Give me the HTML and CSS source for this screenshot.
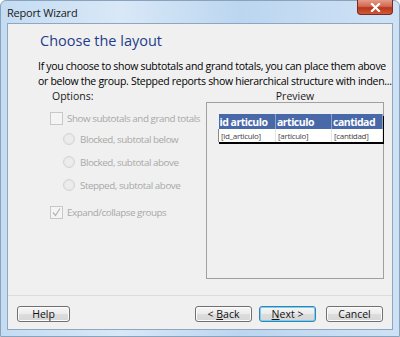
FILE: index.html
```html
<!DOCTYPE html>
<html lang="en">
  <head>
    <meta charset="UTF-8" />
    <title>Report Wizard</title>
    <link rel="stylesheet" href="styles.css">
  </head>
  <body>
    <div class="window">
      <div class="titlebar">
        <span class="title">Report Wizard</span>
        <button class="close" aria-label="Close">
          <svg width="11" height="9" viewBox="0 0 11 9">
            <path d="M2 1 L9 8 M9 1 L2 8" stroke="#fff" stroke-width="2.2" stroke-linecap="square" />
          </svg>
        </button>
      </div>
      <div class="client">
        <h1 class="heading">Choose the layout</h1>
        <p class="intro">
          If you choose to show subtotals and grand totals, you can place them above<br>
          or below the group. Stepped reports show hierarchical structure with inden...
        </p>
        <div class="columns">
          <div class="options">
            <div class="label">Options:</div>
            <label class="check disabled">
              <span class="box"></span>
              Show subtotals and grand totals
            </label>
            <div class="radios">
              <label class="radio disabled"><span class="dot"></span>Blocked, subtotal below</label>
              <label class="radio disabled"><span class="dot"></span>Blocked, subtotal above</label>
              <label class="radio disabled"><span class="dot"></span>Stepped, subtotal above</label>
            </div>
            <label class="check disabled expand">
              <span class="box checked">
                <svg width="9" height="9" viewBox="0 0 9 9">
                  <path d="M1 4.5 L3.5 7.5 L8 0.5" fill="none" stroke="#b4b4b4" stroke-width="1.2" />
                </svg>
              </span>
              Expand/collapse groups
            </label>
          </div>
          <div class="preview">
            <div class="label center">Preview</div>
            <div class="preview-box">
              <table class="report">
                <colgroup>
                  <col class="col-id">
                  <col class="col-name">
                  <col class="col-qty">
                </colgroup>
                <thead>
                  <tr>
                    <th>id articulo</th>
                    <th>articulo</th>
                    <th>cantidad</th>
                  </tr>
                </thead>
                <tbody>
                  <tr>
                    <td>[id_articulo]</td>
                    <td>[articulo]</td>
                    <td>[cantidad]</td>
                  </tr>
                </tbody>
              </table>
            </div>
          </div>
        </div>
        <div class="footer">
          <button class="btn">Help</button>
          <div class="spacer"></div>
          <button class="btn">&lt; <u>B</u>ack</button>
          <button class="btn default"><u>N</u>ext &gt;</button>
          <button class="btn cancel">Cancel</button>
        </div>
      </div>
    </div>
  </body>
</html>
```

FILE: styles.css
```css
html,
body {
  margin: 0;
  padding: 0;
  height: 100%;
}

body {
  font-family: "Open Sans", "Noto Sans", sans-serif;
  font-size: 10.5px;
  color: #000;
  background: #fff;
}

.window {
  width: 400px;
  height: 337px;
  box-sizing: border-box;
  display: flex;
  flex-direction: column;
  background: linear-gradient(90deg, #c4dcf2 0%, #d8e8f7 30%, #bcd6f0 60%, #cfe2f5 100%);
  border: 1px solid #8aa3bd;
  border-radius: 6px 6px 0 0;
}

/* title bar */
.titlebar {
  height: 22px;
  display: flex;
  align-items: flex-start;
  justify-content: space-between;
  padding: 0 6px 0 6px;
}

.title {
  margin-top: 4px;
  font-size: 11px;
  letter-spacing: -0.2px;
  color: #1a1a1a;
}

.close {
  width: 36px;
  height: 15px;
  margin-top: -1px;
  border: 1px solid #7a2a20;
  border-top: none;
  border-radius: 0 0 4px 4px;
  background: linear-gradient(#e49a88 0%, #d36a52 45%, #b8361c 55%, #cf5a3a 100%);
  display: flex;
  align-items: center;
  justify-content: center;
  padding: 0;
}

/* dialog body */
.client {
  flex: 1;
  margin: 0 6px 6px 6px;
  background: #f0f0f0;
  border: 1px solid #8fa6c0;
  display: flex;
  flex-direction: column;
}

.heading {
  margin: 7px 0 0 32px;
  font-size: 14.5px;
  font-weight: normal;
  color: #1f3d8a;
}

.intro {
  margin: 9px 0 0 30px;
  line-height: 15px;
  letter-spacing: -0.3px;
  white-space: nowrap;
}

.columns {
  display: flex;
  margin-top: 0;
}

.options {
  width: 198px;
  box-sizing: border-box;
  padding-left: 44px;
}

.label {
  color: #1a1a1a;
  height: 14px;
}

.label.center {
  text-align: center;
}

.check,
.radio {
  display: flex;
  align-items: center;
  gap: 4px;
  color: #a8a8a8;
  white-space: nowrap;
  font-size: 9.8px;
  letter-spacing: -0.45px;
  height: 14px;
}

.check {
  margin-top: 8px;
  margin-left: -2px;
}

.box {
  flex-shrink: 0;
  width: 11px;
  height: 11px;
  border: 1px solid #c8c8c8;
  background: #f4f4f4;
  display: flex;
  align-items: center;
  justify-content: center;
}

.radios {
  display: flex;
  flex-direction: column;
  gap: 9px;
  margin: 7px 0 0 11px;
}

.dot {
  flex-shrink: 0;
  width: 10px;
  height: 10px;
  border-radius: 50%;
  border: 1px solid #d4d4d4;
  background: radial-gradient(circle, #ececec 40%, #e0e0e0 100%);
  margin-right: 1px;
}

.expand {
  margin-top: 13px;
}

.preview {
  width: 178px;
}

.preview-box {
  height: 177px;
  margin-top: -1px;
  border: 1px solid #a0a0a0;
  box-sizing: border-box;
  padding: 11px 0 0 11px;
}

.report {
  width: 164px;
  table-layout: fixed;
  border-collapse: collapse;
  box-shadow: 1px 2px 0 #000;
}

.col-id {
  width: 57px;
}

.col-name {
  width: 56px;
}

.col-qty {
  width: 51px;
}

.report th {
  background: #4868a8;
  color: #fff;
  text-align: left;
  font-size: 10.5px;
  font-weight: 700;
  height: 15px;
  padding: 0 1px;
  border-right: 1px solid #8ea3cc;
  letter-spacing: -0.5px;
  white-space: nowrap;
  overflow: hidden;
}

.report td {
  background: #fff;
  font-size: 8px;
  color: #444;
  height: 13px;
  padding: 0 2px;
  border-right: 1px solid #e6e6e6;
  letter-spacing: -0.3px;
}

.report td:first-child {
  border-left: 1px solid #8a8a8a;
}

/* buttons */
.footer {
  margin-top: auto;
  border-top: 1px solid #dcdcdc;
  display: flex;
  align-items: center;
  gap: 7px;
  padding: 10px 9px 7px 9px;
}

.spacer {
  flex: 1;
}

.btn {
  height: 16px;
  width: 57px;
  padding: 0;
  font-family: inherit;
  font-size: 10.5px;
  color: #111;
  border: 1px solid #707070;
  border-radius: 3px;
  background: linear-gradient(#f6f6f6 0%, #ebebeb 49%, #dddddd 51%, #d6d6d6 100%);
  box-shadow: inset 0 0 0 1px #fcfcfc;
  line-height: 14px;
}

.btn:first-child {
  width: 53px;
}

.btn.default {
  border-color: #3c7fb1;
  box-shadow: inset 0 0 0 1px #6fd4ef;
}

.btn.cancel {
  margin-left: 3px;
}
```
